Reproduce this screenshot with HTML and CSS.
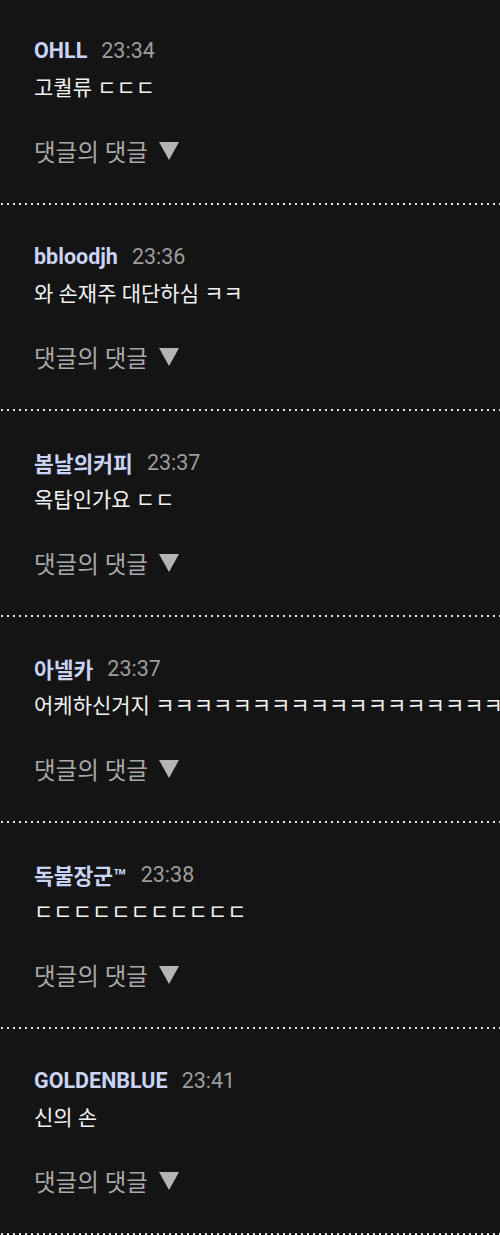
FILE: index.html
```html
<!DOCTYPE html>
<html>
	<head>
		<meta charset="UTF-8">
		<title>댓글</title>
		<link rel="stylesheet" href="styles.css">
	</head>
	<body>
		<ul class="cmt-list">
			<li class="cmt">
				<div class="cmt-head"><span class="nick">OHLL</span><span class="time">23:34</span></div>
				<p class="cmt-text">고퀄류 ㄷㄷㄷ</p>
				<a class="reply" href="#">댓글의 댓글<i class="arrow"></i></a>
			</li>
			<li class="cmt">
				<div class="cmt-head"><span class="nick">bbloodjh</span><span class="time">23:36</span></div>
				<p class="cmt-text">와 손재주 대단하심 ㅋㅋ</p>
				<a class="reply" href="#">댓글의 댓글<i class="arrow"></i></a>
			</li>
			<li class="cmt">
				<div class="cmt-head"><span class="nick">봄날의커피</span><span class="time">23:37</span></div>
				<p class="cmt-text">옥탑인가요 ㄷㄷ</p>
				<a class="reply" href="#">댓글의 댓글<i class="arrow"></i></a>
			</li>
			<li class="cmt">
				<div class="cmt-head"><span class="nick">아넬카</span><span class="time">23:37</span></div>
				<p class="cmt-text">어케하신거지 ㅋㅋㅋㅋㅋㅋㅋㅋㅋㅋㅋㅋㅋㅋㅋㅋㅋㅋㅋㅋㅋㅋ</p>
				<a class="reply" href="#">댓글의 댓글<i class="arrow"></i></a>
			</li>
			<li class="cmt">
				<div class="cmt-head"><span class="nick">독불장군™</span><span class="time">23:38</span></div>
				<p class="cmt-text">ㄷㄷㄷㄷㄷㄷㄷㄷㄷㄷㄷ</p>
				<a class="reply" href="#">댓글의 댓글<i class="arrow"></i></a>
			</li>
			<li class="cmt">
				<div class="cmt-head"><span class="nick">GOLDENBLUE</span><span class="time">23:41</span></div>
				<p class="cmt-text">신의 손</p>
				<a class="reply" href="#">댓글의 댓글<i class="arrow"></i></a>
			</li>
		</ul>
	</body>
</html>
```

FILE: styles.css
```css
* {
	margin: 0;
	padding: 0;
}

ul {
	list-style: none;
}

body {
	background: #141414;
	font-family: Roboto, "Noto Sans CJK KR", sans-serif;
	overflow: hidden;
}

.cmt {
	display: flex;
	flex-direction: column;
	align-items: flex-start;
	padding: 37px 0 37px 34px;
	/* 점선 구분선 */
	background-image: linear-gradient(to right, #e6e6e6 2px, transparent 2px);
	background-size: 6px 2px;
	background-repeat: repeat-x;
	background-position: 1px bottom;
	border-bottom: 2px solid transparent;
	background-origin: border-box;
}

.cmt:first-child {
	padding-top: 36px;
}

.cmt-head {
	display: flex;
	align-items: center;
	gap: 14px;
	height: 28px;
}

.nick {
	color: #c9d3f5;
	font-weight: bold;
	font-size: 21.5px;
}

.time {
	color: #9c9c9c;
	font-size: 21.5px;
}

.cmt-text {
	margin-top: 10px;
	line-height: 28px;
	font-size: 21px;
	color: #f2f2f2;
	white-space: nowrap;
	width: 466px;
	overflow: hidden;
}

.reply {
	display: flex;
	align-items: center;
	margin-top: 34px;
	height: 30px;
	font-size: 23.5px;
	color: #a8a8a8;
	text-decoration: none;
}

.arrow {
	margin-left: 11px;
	width: 0;
	height: 0;
	border-left: 10.5px solid transparent;
	border-right: 10.5px solid transparent;
	border-top: 18px solid #b4b4b4;
}
```
